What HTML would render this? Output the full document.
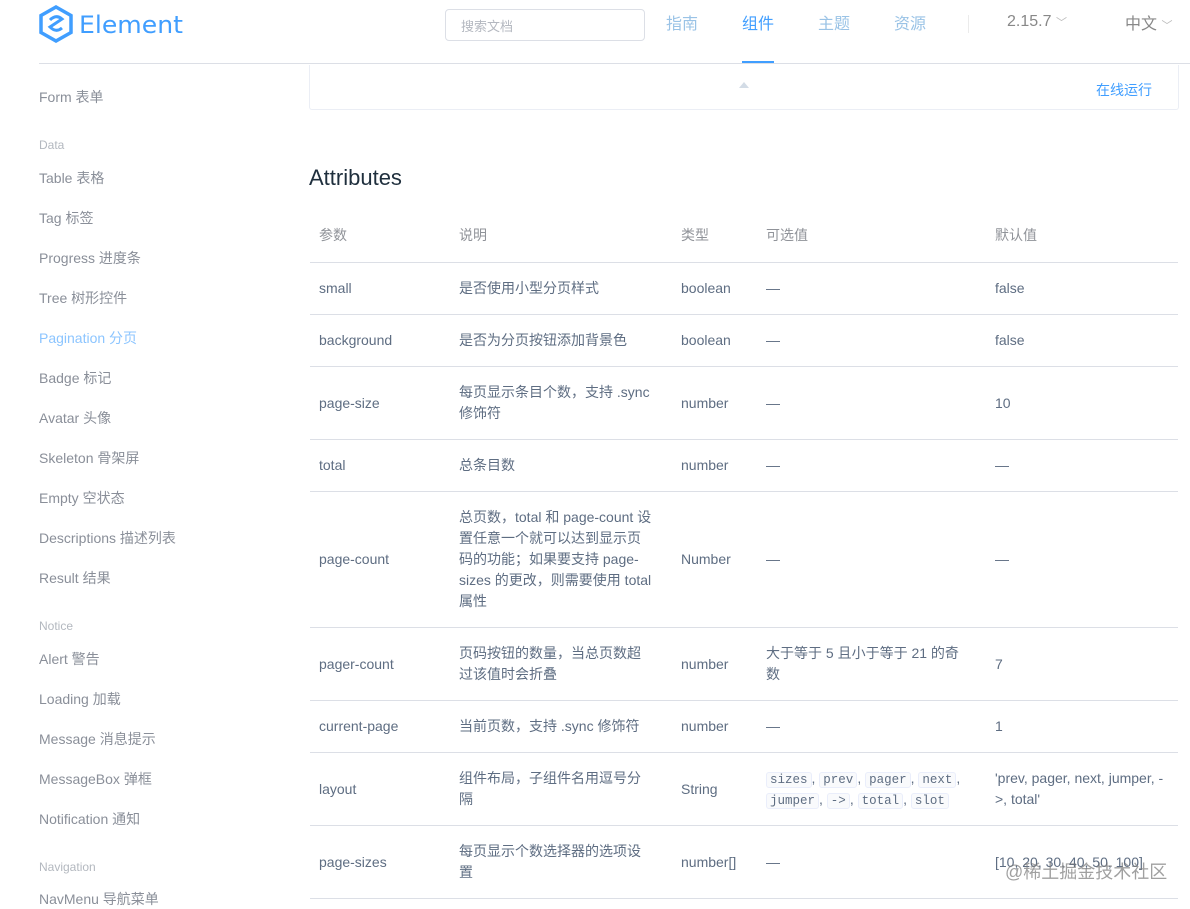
<!DOCTYPE html>
<html><head><meta charset="utf-8"><style>
*{margin:0;padding:0;box-sizing:border-box}
body{width:1190px;height:904px;overflow:hidden;background:#fff;font-family:"Liberation Sans","Noto Sans CJK SC",sans-serif;color:#5e6d82;position:relative}
.hdr{position:absolute;left:0;top:0;width:1190px;height:64px}
.hline{position:absolute;left:39px;right:0;top:63px;border-top:1px solid #dcdfe6}
.logo{position:absolute;left:39px;top:5px}
.search{position:absolute;left:445px;top:9px;width:200px;height:32px;border:1px solid #dcdfe6;border-radius:4px;font-size:13px;color:#b4b8c0;padding:6px 15px}
.nav{position:absolute;top:10px;font-size:16px;color:#9ac3e6}
.sb{position:absolute;left:39px;font-size:14px;color:#8a8f99}
.grp{position:absolute;left:39px;font-size:12px;color:#b3b8bf}
.demo{position:absolute;left:309px;top:65px;width:870px;height:45px;border:1px solid #ebeef5;border-top:none;border-radius:0 0 3px 3px}
h3{position:absolute;left:309px;top:165px;font-size:22px;font-weight:400;color:#1f2f3d}
table{position:absolute;left:310px;top:210px;width:868px;border-collapse:collapse;font-size:14px;color:#5e6d82;table-layout:fixed}
td{border-bottom:1px solid #dcdfe6;padding:15px 10px 15px 9px;line-height:21px;vertical-align:middle}
td:nth-child(2){padding-right:4px;white-space:nowrap}
td:nth-child(4){padding-right:25px}
td:nth-child(5){padding-right:12px}
tr.h td{color:#909399;font-size:14px;padding:15px 10px 16px 9px}
code{font-family:"Liberation Mono",monospace;font-size:12.5px;line-height:16px;background:#f9fafc;border:1px solid #eaeefb;padding:0 3px;border-radius:3px;color:#5e6d82}
</style></head><body>
<div class="hdr">
<svg class="logo" width="150" height="38" viewBox="0 0 150 38">
<path d="M17 2 L32 10.5 L32 27.5 L17 36 L2 27.5 L2 10.5 Z" fill="none" stroke="#409eff" stroke-width="3.5"/>
<path d="M11 15 Q17 9 23 14 L11 22 Q17 28 23 23" fill="none" stroke="#409eff" stroke-width="3"/>
<text x="40" y="28" font-family="DejaVu Sans" font-size="24" fill="#409eff" textLength="104" lengthAdjust="spacingAndGlyphs">Element</text>
</svg>
<div class="search">搜索文档</div>
<div class="nav" style="left:666px">指南</div>
<div class="nav" style="left:742px;color:#409eff">组件</div>
<div style="position:absolute;left:742px;top:61px;width:32px;height:2px;background:#409eff"></div>
<div class="nav" style="left:818px">主题</div>
<div class="nav" style="left:894px">资源</div>
<div style="position:absolute;left:968px;top:15px;height:18px;border-left:1px solid #ebebeb"></div>
<div class="nav" style="left:1007px;color:#888;top:13px">2.15.7 <span style="font-size:11px;color:#bbb">﹀</span></div>
<div class="nav" style="left:1125px;color:#888">中文 <span style="font-size:11px;color:#bbb">﹀</span></div>
<div class="hline"></div>
</div>
<div class="sb" style="top:87px">Form 表单</div>
<div class="grp" style="top:138px">Data</div>
<div class="sb" style="top:168px">Table 表格</div>
<div class="sb" style="top:208px">Tag 标签</div>
<div class="sb" style="top:248px">Progress 进度条</div>
<div class="sb" style="top:288px">Tree 树形控件</div>
<div class="sb" style="top:328px;color:#8cc5ff">Pagination 分页</div>
<div class="sb" style="top:368px">Badge 标记</div>
<div class="sb" style="top:408px">Avatar 头像</div>
<div class="sb" style="top:448px">Skeleton 骨架屏</div>
<div class="sb" style="top:488px">Empty 空状态</div>
<div class="sb" style="top:528px">Descriptions 描述列表</div>
<div class="sb" style="top:568px">Result 结果</div>
<div class="grp" style="top:619px">Notice</div>
<div class="sb" style="top:649px">Alert 警告</div>
<div class="sb" style="top:689px">Loading 加载</div>
<div class="sb" style="top:729px">Message 消息提示</div>
<div class="sb" style="top:769px">MessageBox 弹框</div>
<div class="sb" style="top:809px">Notification 通知</div>
<div class="grp" style="top:860px">Navigation</div>
<div class="sb" style="top:889px">NavMenu 导航菜单</div>
<div class="demo">
<div style="position:absolute;left:429px;top:17px;width:0;height:0;border-left:5px solid transparent;border-right:5px solid transparent;border-bottom:6px solid #d3dce6"></div>
<div style="position:absolute;right:26px;top:15px;font-size:14px;color:#409eff">在线运行</div>
</div>
<h3>Attributes</h3>
<table>
<colgroup><col style="width:140px"><col style="width:222px"><col style="width:85px"><col style="width:229px"><col></colgroup>
<tr class="h"><td>参数</td><td>说明</td><td>类型</td><td>可选值</td><td>默认值</td></tr>
<tr><td>small</td><td>是否使用小型分页样式</td><td>boolean</td><td>—</td><td>false</td></tr>
<tr><td>background</td><td>是否为分页按钮添加背景色</td><td>boolean</td><td>—</td><td>false</td></tr>
<tr><td>page-size</td><td>每页显示条目个数，支持 .sync<br>修饰符</td><td>number</td><td>—</td><td>10</td></tr>
<tr><td>total</td><td>总条目数</td><td>number</td><td>—</td><td>—</td></tr>
<tr><td>page-count</td><td>总页数，total 和 page-count 设<br>置任意一个就可以达到显示页<br>码的功能；如果要支持 page-<br>sizes 的更改，则需要使用 total<br>属性</td><td>Number</td><td>—</td><td>—</td></tr>
<tr><td>pager-count</td><td>页码按钮的数量，当总页数超<br>过该值时会折叠</td><td>number</td><td>大于等于 5 且小于等于 21 的奇数</td><td>7</td></tr>
<tr><td>current-page</td><td>当前页数，支持 .sync 修饰符</td><td>number</td><td>—</td><td>1</td></tr>
<tr><td>layout</td><td>组件布局，子组件名用逗号分<br>隔</td><td>String</td><td><code>sizes</code>, <code>prev</code>, <code>pager</code>, <code>next</code>, <code>jumper</code>, <code>-&gt;</code>, <code>total</code>, <code>slot</code></td><td>'prev, pager, next, jumper, -&gt;, total'</td></tr>
<tr><td>page-sizes</td><td>每页显示个数选择器的选项设<br>置</td><td>number[]</td><td>—</td><td>[10, 20, 30, 40, 50, 100]</td></tr>
</table>
<div style="position:absolute;left:1005px;top:858px;font-size:18px;color:rgba(120,120,120,0.7)">@稀土掘金技术社区</div>
</body></html>
